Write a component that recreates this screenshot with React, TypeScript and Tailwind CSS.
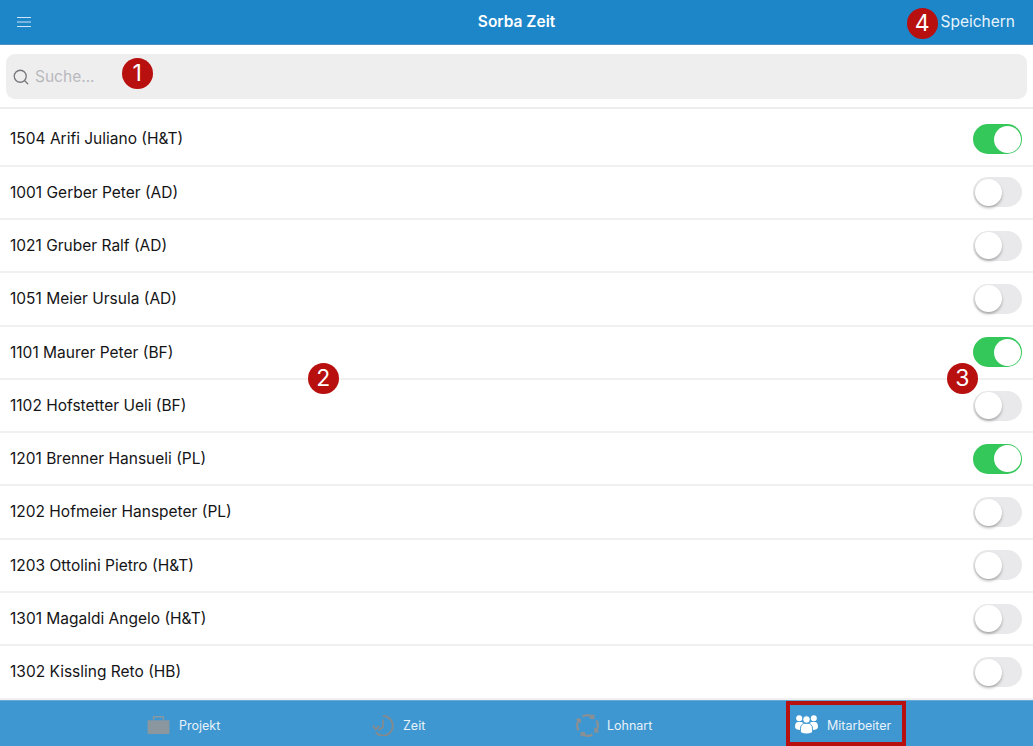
import React from "react";
import { Search } from "lucide-react";

const rows: [string, boolean][] = [
  ["1504 Arifi Juliano (H&T)", true],
  ["1001 Gerber Peter (AD)", false],
  ["1021 Gruber Ralf (AD)", false],
  ["1051 Meier Ursula (AD)", false],
  ["1101 Maurer Peter (BF)", true],
  ["1102 Hofstetter Ueli (BF)", false],
  ["1201 Brenner Hansueli (PL)", true],
  ["1202 Hofmeier Hanspeter (PL)", false],
  ["1203 Ottolini Pietro (H&T)", false],
  ["1301 Magaldi Angelo (H&T)", false],
  ["1302 Kissling Reto (HB)", false],
];

function Toggle({ on }: { on: boolean }) {
  return on ? (
    <div className="flex h-[30px] w-[49px] items-center justify-end rounded-full bg-[#34c759] pr-[1.5px]">
      <div className="h-[27px] w-[27px] rounded-full bg-white" />
    </div>
  ) : (
    <div className="flex h-[30px] w-[49px] items-center rounded-full bg-[#e9e9eb] pl-[1.5px]">
      <div className="h-[27px] w-[27px] rounded-full bg-white shadow-[0_2px_3px_rgba(0,0,0,0.28)]" />
    </div>
  );
}

function Badge({ n, className }: { n: number; className: string }) {
  return (
    <div
      className={
        "absolute flex h-[30.5px] w-[30.5px] items-center justify-center rounded-full bg-[#b80f0f] text-[23px] leading-none text-white " +
        className
      }
    >
      {n}
    </div>
  );
}

function Tab({ label, icon, className }: { label: string; icon: React.ReactNode; className: string }) {
  return (
    <div className={"flex items-center pt-[3px] text-[12.5px] text-[#e8f2fa] " + className}>
      {icon}
      <span className="pt-[3px]">{label}</span>
    </div>
  );
}

export default function App() {
  return (
    <div className="relative flex h-[746px] w-[1033px] flex-col overflow-hidden bg-white font-['Inter','Liberation_Sans',sans-serif] text-[#141416]">
      <header className="relative flex h-[45px] shrink-0 items-center justify-between border-b border-[#4c91c4] bg-[#1c86c8] pl-[17px] pr-[18px] text-white">
        <svg width="14" height="12" viewBox="0 0 14 12" fill="none" stroke="#cfe6f5" strokeWidth="1">
          <path d="M0 1.5h14M0 6h14M0 10.5h14" />
        </svg>
        <div className="absolute inset-x-0 text-center text-[15.5px] font-semibold">Sorba Zeit</div>
        <div className="text-[15.5px] text-[#e8f3fb]">Speichern</div>
      </header>

      <div className="shrink-0 border-b-2 border-[#ececee] px-[6px] pt-[9px] pb-[8px]">
        <div className="flex h-[45px] items-center gap-[5.5px] rounded-[9px] bg-[#eeeeef] pl-[5.5px]">
          <Search size={18} strokeWidth={1.7} className="text-[#77777b]" />
          <span className="pt-[1px] text-[15.5px] text-[#b9b9bd]">Suche...</span>
        </div>
      </div>

      <div className="flex min-h-0 flex-1 flex-col">
        {rows.map(([name, on], i) => (
          <div
            key={name}
            className={
              "flex shrink-0 items-center justify-between border-b-2 border-[#f0f0f0] pl-[10px] pr-[10.7px] text-[15.5px] " +
              (i === 0 ? "h-[57.7px] pt-[4.5px]" : "h-[53.3px]")
            }
          >
            <span>{name}</span>
            <Toggle on={on} />
          </div>
        ))}
      </div>

      <nav className="flex h-[46px] shrink-0 border-t border-[#6aa9d3] bg-[#3e97d1]">
        <Tab
          className="ml-[147px] w-[225px] gap-[9px]"
          label="Projekt"
          icon={
            <svg width="23" height="18" viewBox="0 0 23 19" fill="#8b979f">
              <path d="M0 4.5h23V19H0zM5.5 4V1.2C5.500.5 6 0 6.700 0h9.600c.7 0 1.200.5 1.200 1.200V4h-1.500V1.500h-9V4z" />
            </svg>
          }
        />
        <Tab
          className="w-[204px] gap-[8px]"
          label="Zeit"
          icon={
            <svg width="23" height="21" viewBox="0 0 23 21" fill="none" stroke="#858a8d" strokeWidth="1.900">
              <path d="M11 1A9.800 9.800 0 1 1 3.800 17.500" />
              <path d="M0.800 10.500l3 3.800 3.500-3.400" />
              <path d="M11 4.500v7.500l-4.500 3.500" strokeWidth="1.700" />
              <path d="M16.500 6.500h.01M18 11h.01M16.500 15.500h.01M12 17.500h.01" strokeWidth="2.200" />
            </svg>
          }
        />
        <Tab
          className="w-[210px] gap-[8px]"
          label="Lohnart"
          icon={
            <svg width="23" height="23" viewBox="0 0 23 23" fill="none" stroke="#8d8f90" strokeWidth="2.200">
              <path d="M6.500 2.500A10 10 0 0 1 17 3M20.500 6.500A10 10 0 0 1 20 17M16.500 20.500A10 10 0 0 1 6 20M2.500 16.500A10 10 0 0 1 3 6" />
              <path d="M17.500 0.500v3.500h-3.500M22.500 17.500h-3.500v-3.500M5.500 22.500v-3.500h3.500M0.500 5.500h3.500v3.500" strokeWidth="1.800" />
            </svg>
          }
        />
        <div className="flex h-[45px] w-[120px] items-center gap-[9px] border-4 border-[#b80f0f] pl-[5px] pt-[1px] text-[12.5px] text-[#e8f2fa]">
          <svg width="23" height="19" viewBox="0 0 23 19" fill="white">
            <circle cx="4.200" cy="3.200" r="3" />
            <circle cx="18.800" cy="3.200" r="3" />
            <path d="M0 12c0-3.500 1.200-5 3-5h3c1 0 2 .6 3 1.500C6.500 9.500 5 11.500 5 15c-2.500 0-5-1-5-3zM23 12c0-3.500-1.200-5-3-5h-3c-1 0-2 .6-3 1.500 2.500 1 4 3 4 6.500 2.500 0 5-1 5-3z" />
            <circle cx="11.500" cy="4.500" r="3.700" stroke="#3e97d1" strokeWidth="0.800" />
            <path d="M5.500 17v-3.500c0-3 2-5 3.500-5h5c1.500 0 3.500 2 3.500 5V17c-2 2.500-10 2.500-12 0z" stroke="#3e97d1" strokeWidth="0.800" />
          </svg>
          <span className="pt-[4px]">Mitarbeiter</span>
        </div>
      </nav>

      <Badge n={1} className="left-[122px] top-[58px]" />
      <Badge n={2} className="left-[308px] top-[363px]" />
      <Badge n={3} className="left-[947px] top-[363px]" />
      <Badge n={4} className="left-[907px] top-[8px]" />
    </div>
  );
}
